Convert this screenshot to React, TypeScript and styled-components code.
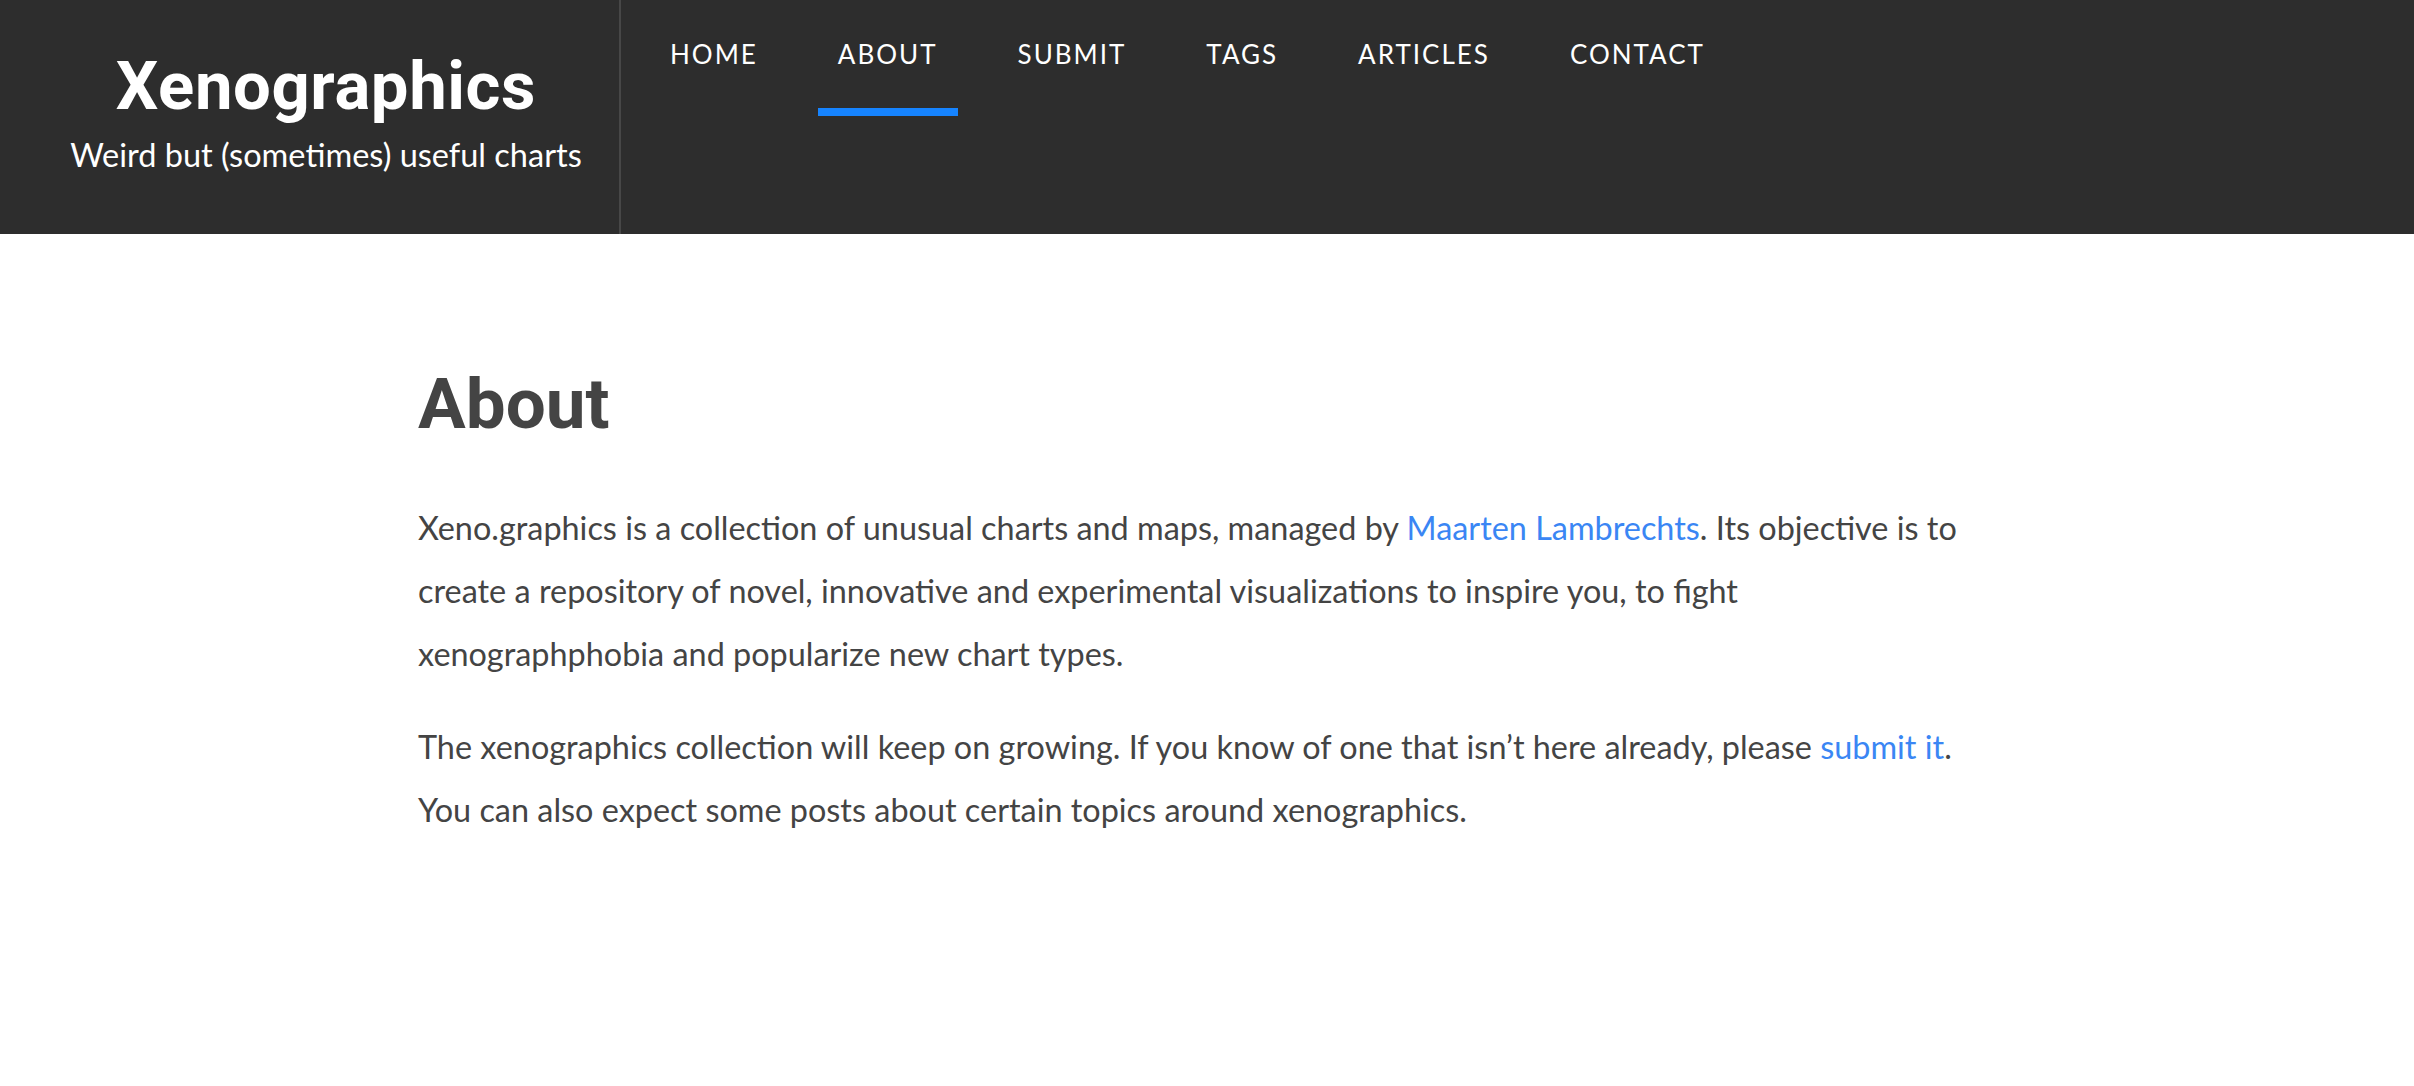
import React from "react";
import styled, { createGlobalStyle } from "styled-components";

const GlobalStyle = createGlobalStyle`
  html, body {
    margin: 0;
    padding: 0;
    background: #ffffff;
  }
  body {
    font-family: Lato, "Noto Sans", sans-serif;
    color: #444444;
  }
  * { box-sizing: border-box; }
`;

const Header = styled.header`
  display: flex;
  align-items: stretch;
  height: 234px;
  background: #2d2d2d;
`;

const Brand = styled.div`
  width: 621px;
  flex: none;
  display: flex;
  flex-direction: column;
  align-items: center;
  padding-left: 33px;
  border-right: 2px solid #474747;
`;

const Title = styled.h1`
  margin: 53px 0 0;
  font-family: Roboto, "Liberation Sans", sans-serif;
  font-weight: 700;
  font-size: 67px;
  line-height: 66px;
  color: #ffffff;
  letter-spacing: 0.6px;
`;

const Tagline = styled.div`
  margin-top: 16px;
  font-family: Lato, "Noto Sans", sans-serif;
  font-size: 32.5px;
  line-height: 40px;
  color: #ffffff;
`;

const Nav = styled.nav`
  display: flex;
  align-items: flex-start;
  padding-left: 9px;
`;

const NavLink = styled.a<{ $active?: boolean }>`
  display: block;
  margin: 0 20px;
  padding: 40px 20px;
  font-family: Lato, "Noto Sans", sans-serif;
  font-size: 26px;
  line-height: 28px;
  letter-spacing: 2px;
  text-transform: uppercase;
  color: #ffffff;
  text-decoration: none;
  border-bottom: 8px solid ${(p) => (p.$active ? "#1684ff" : "transparent")};
`;

const Main = styled.main`
  max-width: 1550px;
  margin-left: 418px;
  padding-top: 133px;
`;

const Heading = styled.h2`
  margin: 0;
  font-family: Roboto, "Liberation Sans", sans-serif;
  font-weight: 700;
  font-size: 71px;
  line-height: 73px;
  color: #444444;
`;

const Paragraph = styled.p`
  margin: 0;
  font-family: Lato, "Noto Sans", sans-serif;
  font-size: 32.4px;
  line-height: 63px;
  color: #444444;

  & + & {
    margin-top: 30px;
  }
  &:first-of-type {
    margin-top: 56px;
  }
`;

const Link = styled.a`
  color: #3a86f4;
  text-decoration: none;
`;

const navItems = ["Home", "About", "Submit", "Tags", "Articles", "Contact"];

export default function App() {
  return (
    <>
      <GlobalStyle />
      <Header>
        <Brand>
          <Title>Xenographics</Title>
          <Tagline>Weird but (sometimes) useful charts</Tagline>
        </Brand>
        <Nav>
          {navItems.map((item) => (
            <NavLink key={item} href="#" $active={item === "About"}>
              {item}
            </NavLink>
          ))}
        </Nav>
      </Header>
      <Main>
        <Heading>About</Heading>
        <Paragraph>
          Xeno.graphics is a collection of unusual charts and maps, managed by{" "}
          <Link href="#">Maarten Lambrechts</Link>. Its objective is to create a
          repository of novel, innovative and experimental visualizations to
          inspire you, to fight xenographphobia and popularize new chart types.
        </Paragraph>
        <Paragraph>
          The xenographics collection will keep on growing. If you know of one
          that isn’t here already, please <Link href="#">submit it</Link>. You
          can also expect some posts about certain topics around xenographics.
        </Paragraph>
      </Main>
    </>
  );
}
